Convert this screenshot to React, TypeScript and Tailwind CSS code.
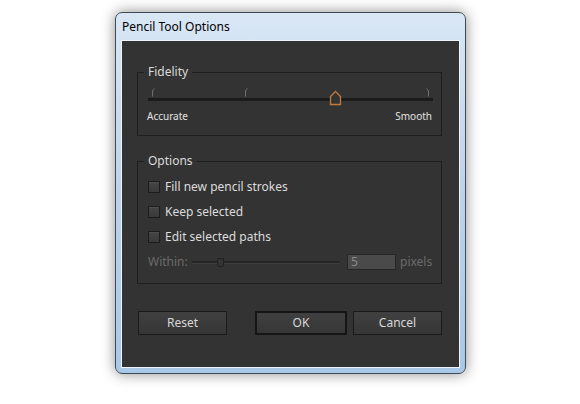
import React from "react";

function Checkbox() {
  return (
    <span className="w-[12px] h-[12px] border border-[#1c1c1c] bg-gradient-to-b from-[#454545] to-[#3a3a3a] shadow-[inset_0_1px_0_rgba(255,255,255,0.06)] shrink-0" />
  );
}

function Button({ label, primary }: { label: string; primary?: boolean }) {
  return (
    <button
      className={
        "h-[24px] flex items-center justify-center text-[12px] text-[#d8d8d8] bg-gradient-to-b from-[#404040] to-[#363636] " +
        (primary
          ? "w-[92px] border-2 border-[#151515]"
          : "w-[89px] border border-[#1a1a1a]")
      }
    >
      {label}
    </button>
  );
}

export default function App() {
  return (
    <div
      className="w-[580px] h-[404px] bg-white pl-[115px] pt-[12px]"
      style={{ fontFamily: '"Noto Sans", "Open Sans", sans-serif' }}
    >
      <div className="w-[351px] h-[362px] rounded-[7px] border border-[#3f4a55] bg-gradient-to-b from-[#d9e7f5] via-[#bcd3ea] to-[#a9c8e8] shadow-[0_0_14px_rgba(0,0,0,0.45)] flex flex-col">
        <div className="h-[27px] pl-[6px] flex items-center text-[12px] text-black leading-none">
          Pencil Tool Options
        </div>
        <div className="mx-[5px] mb-[5px] flex-1 border border-[#eef4fa] bg-[#333333] pt-[24px] pl-[15px] text-[#d6d6d6]">
          <fieldset className="w-[305px] h-[71px] border border-[#1e1e1e] pl-[10px] pr-[9px]">
            <legend className="-ml-[4px] px-[4px] text-[12px] leading-[14px] text-[#dadada]">
              Fidelity
            </legend>
            <div className="relative h-[20px] mt-[8px]">
              <svg className="absolute left-[-1px] top-0" width="288" height="20">
                <path d="M7.5 1.5 Q5.5 2.5 5.5 5 V9.5" stroke="#707070" fill="none" strokeWidth="1" />
                <path d="M100.5 1.5 Q98.5 2.5 98.5 5 V9.5" stroke="#707070" fill="none" strokeWidth="1" />
                <path d="M279.5 1.5 Q281.5 2.5 281.5 5 V9.5" stroke="#707070" fill="none" strokeWidth="1" />
                <rect x="1" y="11" width="285" height="3" fill="#1b1b1b" />
                <path d="M188.5 4.5 L193.5 9.5 V17.5 H183.5 V9.5 Z" stroke="#c47a3a" strokeWidth="1.3" fill="#333333" />
              </svg>
            </div>
            <div className="flex justify-between mt-[3px] text-[10px] leading-[12px] text-[#e2e2e2] -ml-[1px]">
              <span>Accurate</span>
              <span>Smooth</span>
            </div>
          </fieldset>

          <fieldset className="w-[305px] h-[130px] mt-[18px] border border-[#1e1e1e] pl-[10px]">
            <legend className="-ml-[4px] px-[4px] text-[12px] leading-[14px] text-[#dadada]">
              Options
            </legend>
            <div className="flex flex-col pt-[6px] text-[12px] text-[#dcdcdc]">
              {["Fill new pencil strokes", "Keep selected", "Edit selected paths"].map((t) => (
                <div key={t} className="h-[25px] flex items-center gap-[5px]">
                  <Checkbox />
                  <span>{t}</span>
                </div>
              ))}
              <div className="h-[26px] flex items-center text-[#6b6b6b]">
                <span className="w-[44px]">Within:</span>
                <div className="relative w-[148px] h-[12px]">
                  <div className="absolute left-0 right-0 top-[5px] h-[3px] bg-[#262626] border-b border-[#3e3e3e]" />
                  <div className="absolute left-[25px] top-[2px] w-[7px] h-[9px] bg-[#333333] border border-[#222222] rounded-b-[2px]" />
                </div>
                <div className="ml-[7px] w-[49px] h-[16px] bg-[#4a4a4a] border border-[#262626] pl-[3px] flex items-center text-[#8a8a8a] leading-none">
                  5
                </div>
                <span className="ml-[4px]">pixels</span>
              </div>
            </div>
          </fieldset>

          <div className="w-[305px] mt-[27px] flex items-center pl-[1px]">
            <Button label="Reset" />
            <div className="ml-auto flex gap-[6px]">
              <Button label="OK" primary />
              <Button label="Cancel" />
            </div>
          </div>
        </div>
      </div>
    </div>
  );
}
